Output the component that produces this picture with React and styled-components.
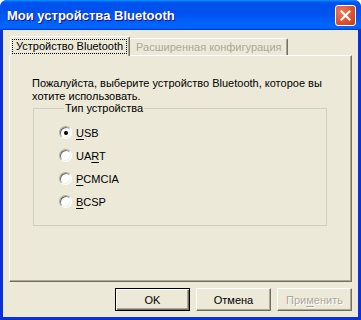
import React from "react"
import styled, { createGlobalStyle } from "styled-components"

const GlobalStyle = createGlobalStyle`
  html, body {
    margin: 0;
    padding: 0;
    background: #fff;
  }
  body {
    font-family: "Liberation Sans", Arial, sans-serif;
    font-size: 11px;
    color: #000;
  }
`

const Window = styled.div`
  width: 361px;
  height: 320px;
  display: flex;
  flex-direction: column;
  background: #0831d9;
  border-radius: 7px 7px 0 0;
  overflow: hidden;
  box-sizing: border-box;
`

const TitleBar = styled.div`
  height: 30px;
  flex: none;
  display: flex;
  align-items: center;
  justify-content: space-between;
  padding: 0 5px 0 7px;
  background: linear-gradient(180deg, #0997ff, #0053ee 8%, #0050ee 40%, #0066ff 88%, #0066ff 93%, #005bff 95%, #003dd7 96%, #003dd7);
`

const Title = styled.span`
  font-family: "Liberation Sans", Arial, sans-serif;
  font-weight: bold;
  font-size: 13px;
  color: #fff;
  text-shadow: 1px 1px #0f1089;
`

const CloseButton = styled.div`
  width: 21px;
  height: 21px;
  box-sizing: border-box;
  border: 1px solid #fff;
  border-radius: 3px;
  background: radial-gradient(circle at 30% 30%, #e97c5d 0%, #e0552f 50%, #c93b17 100%);
  display: flex;
  align-items: center;
  justify-content: center;
`

const Client = styled.div`
  flex: 1;
  min-height: 0;
  margin: 0 3px 3px;
  background: #ece9d8;
  padding: 7px 6px 6px;
  display: flex;
  flex-direction: column;
`

const TabRow = styled.div`
  display: flex;
  align-items: flex-end;
  height: 19px;
  position: relative;
  z-index: 1;
  margin-bottom: -1px;
  padding-left: 1px;
`

const Tab = styled.div`
  box-sizing: border-box;
  height: ${p => (p.$active ? "20px" : "17px")};
  margin-bottom: ${p => (p.$active ? "0" : "1px")};
  padding: ${p => (p.$active ? "2px 2px 0 1px" : "1px 3px 0 4px")};
  background: #ece9d8;
  border-top: 1px solid #fff;
  border-left: ${p => (p.$active ? "1px solid #fff" : "none")};
  border-right: 1px solid #716f64;
  box-shadow: inset -1px 0 #aca899;
  color: ${p => (p.$active ? "#000" : "#aca899")};
  border-radius: 2px 2px 0 0;
  white-space: nowrap;
`

const FocusLabel = styled.span`
  display: inline-block;
  padding: 1px 4px;
  line-height: 13px;
  outline: 1px dotted #000;
  outline-offset: -1px;
`

const TabLabel = styled.span`
  display: inline-block;
  padding: 1px 2px;
  line-height: 13px;
`

const Panel = styled.div`
  flex: 1;
  border: 1px solid;
  border-color: #fff #716f64 #716f64 #fff;
  box-shadow: inset -1px -1px #aca899;
  padding: 21px 20px 0 22px;
  display: flex;
  flex-direction: column;
`

const Prompt = styled.p`
  margin: 0;
  line-height: 13px;
`

const GroupBox = styled.fieldset`
  flex: none;
  margin: -1px 4px 0 1px;
  height: 124px;
  box-sizing: border-box;
  border: 1px solid #d0d0bf;
  border-radius: 0;
  padding: 11px 0 0 25px;
  display: flex;
  flex-direction: column;
  gap: 10px;
`

const Legend = styled.legend`
  padding: 0 1px;
  margin-left: 5px;
  line-height: 13px;
`

const RadioRow = styled.label`
  display: flex;
  align-items: center;
  gap: 4px;
  height: 13px;
`

const RadioCircle = styled.span`
  width: 13px;
  height: 13px;
  box-sizing: border-box;
  border-radius: 50%;
  border: 1px solid;
  border-color: #aca899 #fff #fff #aca899;
  background: #fff;
  box-shadow: inset 1px 1px #716f64, inset -1px -1px #f1efe2;
  display: flex;
  align-items: center;
  justify-content: center;
  flex: none;
`

const RadioDot = styled.span`
  width: 4px;
  height: 4px;
  border-radius: 50%;
  background: #000;
`

const Hot = styled.span`
  text-decoration: underline;
  text-underline-offset: 2px;
`

const ButtonRow = styled.div`
  display: flex;
  justify-content: flex-end;
  gap: 6px;
  padding-top: 6px;
`

const Button = styled.div`
  width: 75px;
  height: 23px;
  box-sizing: border-box;
  display: flex;
  align-items: center;
  justify-content: center;
  background: #ece9d8;
  border: 1px solid;
  border-color: ${p => (p.$default ? "#000" : "#fff #716f64 #716f64 #fff")};
  box-shadow: ${p =>
    p.$default
      ? "inset 1px 1px #fff, inset -1px -1px #716f64, inset -2px -2px #aca899"
      : "inset -1px -1px #aca899"};
  color: ${p => (p.$disabled ? "#aca899" : "#000")};
  text-shadow: ${p => (p.$disabled ? "1px 1px #fff" : "none")};
`

const devices = [
  { pre: "", hot: "U", post: "SB", checked: true },
  { pre: "UA", hot: "R", post: "T" },
  { pre: "", hot: "P", post: "CMCIA" },
  { pre: "", hot: "B", post: "CSP" },
]

export default function App() {
  return (
    <>
      <GlobalStyle />
      <Window>
        <TitleBar>
          <Title>Мои устройства Bluetooth</Title>
          <CloseButton>
            <svg width="11" height="11" viewBox="0 0 11 11">
              <path d="M1.5 1.5 L9.5 9.5 M9.5 1.5 L1.5 9.5" stroke="#fff" strokeWidth="2.2" strokeLinecap="square" />
            </svg>
          </CloseButton>
        </TitleBar>
        <Client>
          <TabRow>
            <Tab $active>
              <FocusLabel>Устройство Bluetooth</FocusLabel>
            </Tab>
            <Tab>
              <TabLabel>Расширенная конфигурация</TabLabel>
            </Tab>
          </TabRow>
          <Panel>
            <Prompt>
              Пожалуйста, выберите устройство Bluetooth, которое вы хотите использовать.
            </Prompt>
            <GroupBox>
              <Legend>Тип устройства</Legend>
              {devices.map(d => (
                <RadioRow key={d.pre + d.hot + d.post}>
                  <RadioCircle>{d.checked && <RadioDot />}</RadioCircle>
                  <span>
                    {d.pre}
                    <Hot>{d.hot}</Hot>
                    {d.post}
                  </span>
                </RadioRow>
              ))}
            </GroupBox>
          </Panel>
          <ButtonRow>
            <Button $default>OK</Button>
            <Button>Отмена</Button>
            <Button $disabled>
              <span>
                При<Hot>м</Hot>енить
              </span>
            </Button>
          </ButtonRow>
        </Client>
      </Window>
    </>
  )
}
